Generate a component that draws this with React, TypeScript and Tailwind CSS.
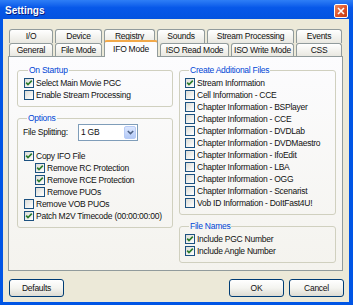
import React from 'react';

const font = "font-['Liberation_Sans',Arial,sans-serif]";

function Check({ checked }: { checked?: boolean }) {
  return (
    <span className="flex h-[10px] w-[10px] shrink-0 items-center justify-center border border-[#1C5180] bg-linear-to-br from-[#DCDCD7] to-white">
      {checked && (
        <svg width="8" height="8" viewBox="0 0 8 8">
          <path d="M1.2 3.6 L3 5.6 L6.8 1.6" stroke="#2B7A2B" strokeWidth="1.6" fill="none" />
        </svg>
      )}
    </span>
  );
}

function Row({ label, checked, indent }: { label: string; checked?: boolean; indent?: boolean }) {
  return (
    <div className={indent ? 'flex h-[12px] items-center gap-[2px] pl-[11px]' : 'flex h-[12px] items-center gap-[2px]'}>
      <Check checked={checked} />
      <span className="whitespace-nowrap">{label}</span>
    </div>
  );
}

function Group({ title, className, children }: { title: string; className?: string; children: React.ReactNode }) {
  return (
    <fieldset className={`rounded-[3px] border border-[#D0D0BF] pb-[5px] ${className ?? ''}`}>
      <legend className="ml-[4px] px-[1px] leading-[10px] text-[#0046D5]">{title}</legend>
      {children}
    </fieldset>
  );
}

function Tab({ label, w, selected }: { label: string; w: string; selected?: boolean }) {
  if (selected) {
    return (
      <div
        className={`relative z-10 mb-[-1px] flex h-[17px] items-center justify-center whitespace-nowrap rounded-t-[3px] border-x border-t-2 border-x-[#919B9C] border-t-[#F2A94A] bg-[#FCFCFE] ${w}`}
      >
        {label}
      </div>
    );
  }
  return (
    <div
      className={`flex h-full items-center justify-center whitespace-nowrap rounded-t-[3px] border border-b-0 border-[#919B9C] bg-linear-to-b from-white to-[#E9E8E1] ${w}`}
    >
      {label}
    </div>
  );
}

function Button({ label, className }: { label: string; className?: string }) {
  return (
    <div
      className={`flex h-[18px] w-[55px] items-center justify-center rounded-[3px] border border-[#003C74] bg-linear-to-b from-white via-[#F4F4F0] to-[#DDDCD3] ${className ?? ''}`}
    >
      {label}
    </div>
  );
}

export default function App() {
  return (
    <div className={`flex h-[305px] w-[353px] flex-col bg-[#0055E5] text-[8.5px] tracking-[-0.25px] text-[#111] ${font}`}>
      {/* title bar */}
      <div className="flex h-[19px] shrink-0 items-start justify-between bg-linear-to-b from-[#2E7EF6] via-[#0758E9] via-40% to-[#0453E0]">
        <span className="ml-[5px] mt-[5px] text-[10px] font-bold leading-[12px] tracking-normal text-white [text-shadow:1px_1px_0_#0A1E80]">
          Settings
        </span>
        <div className="mr-[5px] mt-[4px] flex h-[14px] w-[14px] items-center justify-center rounded-[2px] border border-white bg-linear-to-br from-[#F08A5C] via-[#E0542A] to-[#C23A14]">
          <svg width="8" height="8" viewBox="0 0 8 8">
            <path d="M1 1 L7 7 M7 1 L1 7" stroke="white" strokeWidth="1.6" />
          </svg>
        </div>
      </div>

      {/* dialog body */}
      <div className="ml-[3px] mr-[4px] mb-[3px] flex flex-1 flex-col bg-[#ECE9D8] pl-[5px] pt-[10px]">
        <div className="ml-[1px] flex h-[14px] gap-[2px]">
          <Tab label="I/O" w="w-[44px]" />
          <Tab label="Device" w="w-[47px]" />
          <Tab label="Registry" w="w-[51px]" />
          <Tab label="Sounds" w="w-[48px]" />
          <Tab label="Stream Processing" w="w-[87px]" />
          <Tab label="Events" w="w-[46px]" />
        </div>
        <div className="ml-[1px] flex h-[13px] items-end gap-[2px]">
          <Tab label="General" w="w-[44px]" />
          <Tab label="File Mode" w="w-[47px]" />
          <Tab label="IFO Mode" w="w-[54px]" selected />
          <Tab label="ISO Read Mode" w="w-[69px]" />
          <Tab label="ISO Write Mode" w="w-[63px]" />
          <Tab label="CSS" w="w-[46px]" />
        </div>

        {/* tab page */}
        <div className="flex h-[215px] w-[335px] gap-[6px] border border-[#919B9C] bg-linear-to-b from-[#FCFCFE] to-[#F4F3EE] pl-[8px] pt-[8px]">
          <div className="flex w-[156px] flex-col gap-[6px]">
            <Group title="On Startup" className="pl-[6px]">
              <div className="pt-[2px]">
                <Row label="Select Main Movie PGC" checked />
                <Row label="Enable Stream Processing" />
              </div>
            </Group>
            <Group title="Options" className="pl-[5px]">
              <div className="mt-[1px] flex h-[17px] items-center">
                <span className="w-[55px]">File Splitting:</span>
                <div className="flex h-[17px] w-[60px] items-center justify-between border border-[#7F9DB9] bg-white pl-[2px] pr-[1px]">
                  <span>1 GB</span>
                  <div className="flex h-[13px] w-[12px] items-center justify-center rounded-[2px] border border-[#B7CBF5] bg-linear-to-b from-[#DCE7FE] to-[#B3C9F6]">
                    <svg width="7" height="5" viewBox="0 0 7 5">
                      <path d="M0.8 1 L3.5 3.6 L6.2 1" stroke="#4D6185" strokeWidth="1.5" fill="none" />
                    </svg>
                  </div>
                </div>
              </div>
              <div className="mt-[9px] pl-[1px]">
                <Row label="Copy IFO File" checked />
                <Row label="Remove RC Protection" checked indent />
                <Row label="Remove RCE Protection" checked indent />
                <Row label="Remove PUOs" indent />
                <Row label="Remove VOB PUOs" />
                <Row label="Patch M2V Timecode (00:00:00:00)" checked />
              </div>
            </Group>
          </div>

          <div className="flex w-[157px] flex-col gap-[6px]">
            <Group title="Create Additional Files" className="pl-[5px]">
              <div className="pt-[2px]">
                <Row label="Stream Information" checked />
                <Row label="Cell Information - CCE" />
                <Row label="Chapter Information - BSPlayer" />
                <Row label="Chapter Information - CCE" />
                <Row label="Chapter Information - DVDLab" />
                <Row label="Chapter Information - DVDMaestro" />
                <Row label="Chapter Information - IfoEdit" />
                <Row label="Chapter Information - LBA" />
                <Row label="Chapter Information - OGG" />
                <Row label="Chapter Information - Scenarist" />
                <Row label="Vob ID Information - DoItFast4U!" />
              </div>
            </Group>
            <Group title="File Names" className="pl-[5px]">
              <div className="pt-[2px]">
                <Row label="Include PGC Number" checked />
                <Row label="Include Angle Number" checked />
              </div>
            </Group>
          </div>
        </div>

        {/* buttons */}
        <div className="mt-[8px] flex w-[336px]">
          <Button label="Defaults" className="ml-[1px]" />
          <Button label="OK" className="ml-auto" />
          <Button label="Cancel" className="ml-[5px]" />
        </div>
      </div>
    </div>
  );
}
